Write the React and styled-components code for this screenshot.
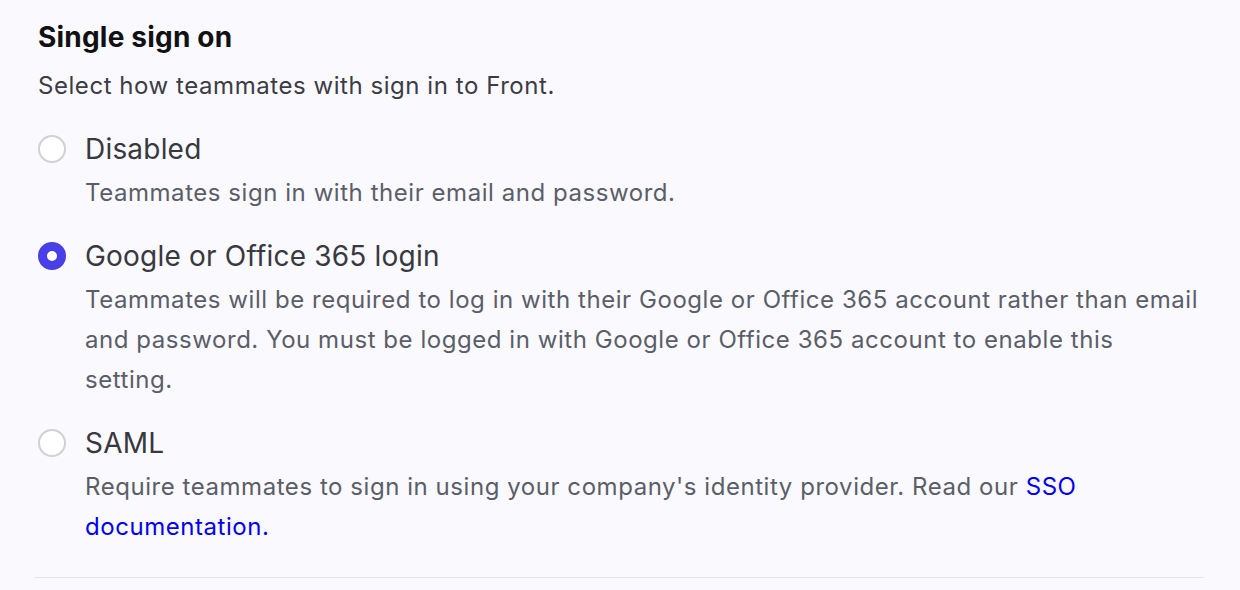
import React from "react";
import styled, { createGlobalStyle } from "styled-components";

const Global = createGlobalStyle`
  html, body { margin: 0; padding: 0; background: #f9f9fe; }
  body { font-family: Inter, "Noto Sans", sans-serif; -webkit-font-smoothing: antialiased; }
`;

const Page = styled.div`
  width: 1240px;
  height: 590px;
  box-sizing: border-box;
  padding: 19px 36px 0 34px;
  background: #f9f9fe;
`;

const Section = styled.section`
  padding: 0 0 30px 4px;
  border-bottom: 1px solid #e4e4e9;
`;

const Title = styled.h2`
  margin: 0;
  font-size: 28px;
  line-height: 36px;
  font-weight: 700;
  letter-spacing: 0.2px;
  color: #111114;
`;

const Subtitle = styled.p`
  margin: 14px 0 0;
  font-size: 24px;
  line-height: 34px;
  letter-spacing: 0.55px;
  color: #3c3c46;
`;

const Options = styled.div`
  display: flex;
  flex-direction: column;
  gap: 23px;
  margin-top: 26px;
`;

const Option = styled.label`
  display: grid;
  grid-template-columns: 28px 1fr;
  column-gap: 19px;
  cursor: pointer;
`;

const Radio = styled.span`
  width: 28px;
  height: 28px;
  box-sizing: border-box;
  border-radius: 50%;
  margin-top: 6px;
  border: ${(p) => (p.$checked ? "9px solid #4a3fe6" : "2px solid #d0d0d5")};
  background: #fff;
`;

const Label = styled.div`
  font-size: 28px;
  line-height: 40px;
  letter-spacing: 0.2px;
  color: #38383f;
`;

const Desc = styled.p`
  grid-column: 2;
  margin: 4px 0 0;
  font-size: 24px;
  line-height: 40px;
  letter-spacing: 0.55px;
  color: #5b5e68;
`;

const Link = styled.a`
  color: #0000ee;
  text-decoration: none;
`;

const options = [
  {
    id: "disabled",
    label: "Disabled",
    desc: "Teammates sign in with their email and password.",
  },
  {
    id: "google",
    label: "Google or Office 365 login",
    desc:
      "Teammates will be required to log in with their Google or Office 365 account rather than email and password. You must be logged in with Google or Office 365 account to enable this setting.",
    checked: true,
  },
  {
    id: "saml",
    label: "SAML",
    desc: (
      <>
        Require teammates to sign in using your company's identity provider. Read our{" "}
        <Link href="#">SSO documentation.</Link>
      </>
    ),
  },
];

export default function App() {
  return (
    <>
      <Global />
      <Page>
        <Section>
          <Title>Single sign on</Title>
          <Subtitle>Select how teammates with sign in to Front.</Subtitle>
          <Options>
            {options.map((o) => (
              <Option key={o.id}>
                <Radio $checked={o.checked} />
                <Label>{o.label}</Label>
                <Desc>{o.desc}</Desc>
              </Option>
            ))}
          </Options>
        </Section>
      </Page>
    </>
  );
}
